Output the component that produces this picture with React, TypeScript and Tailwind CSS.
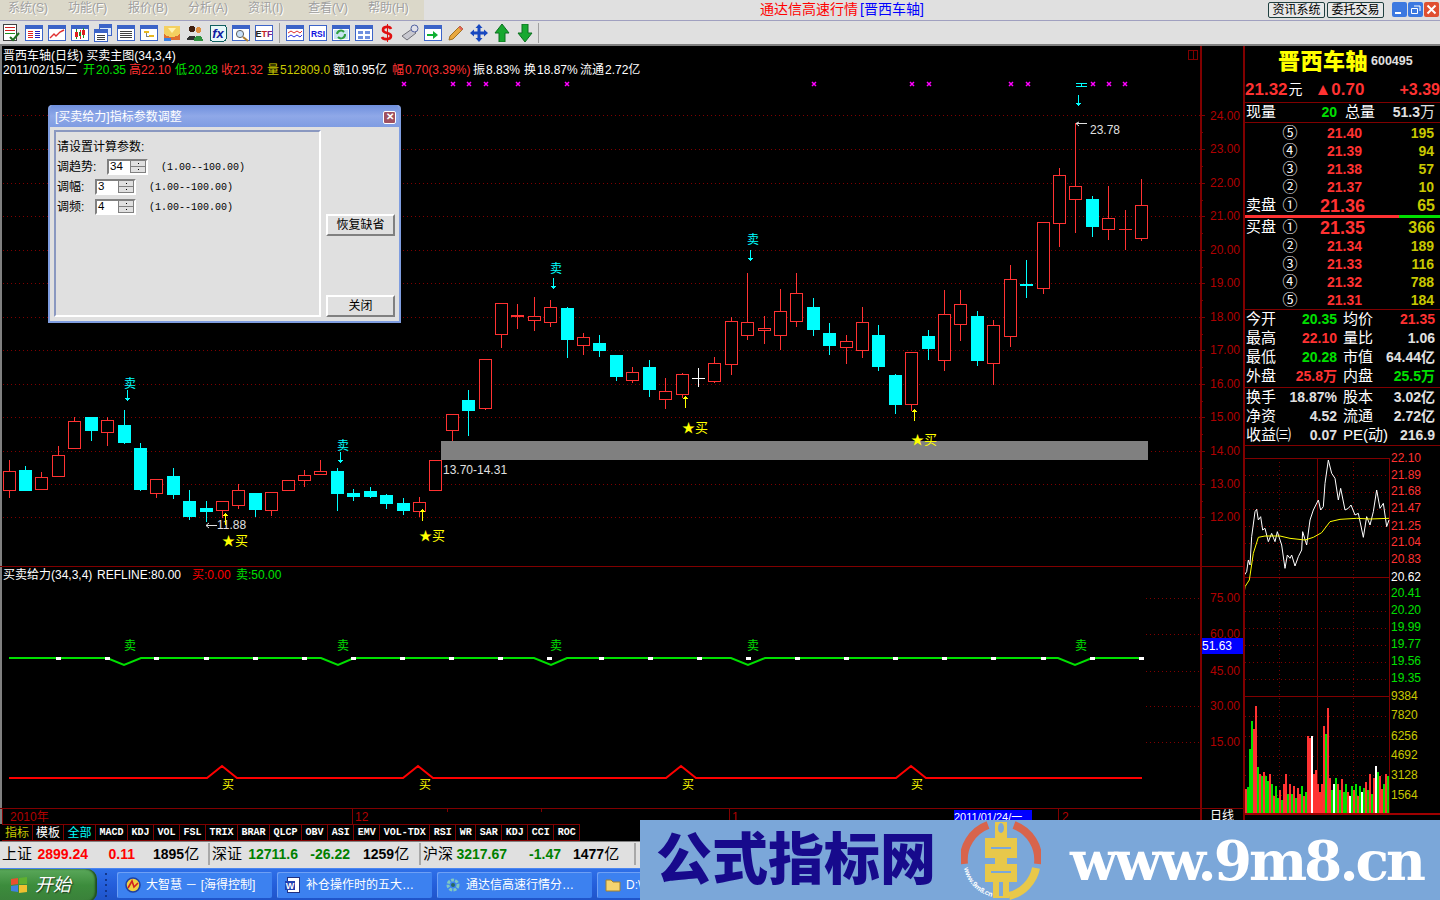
import React from 'react';

// [x, wickTop, wickBottom, bodyTop, bodyBottom, colour: r=hollow red, c=cyan, w=white]
const candles: [number, number, number, number, number, string][] = [
  [9, 460, 498, 471, 491, 'r'], [25, 466, 491, 470, 491, 'c'], [41, 472, 490, 477, 490, 'r'], [58, 446, 477, 455, 477, 'r'],
  [74, 417, 449, 421, 449, 'r'], [91, 417, 441, 417, 431, 'c'], [107, 417, 446, 420, 433, 'r'], [124, 410, 444, 425, 443, 'c'],
  [140, 443, 491, 448, 490, 'c'], [156, 479, 498, 479, 494, 'r'], [173, 468, 499, 476, 495, 'c'], [189, 490, 520, 501, 517, 'c'],
  [206, 501, 522, 508, 512, 'c'], [222, 501, 518, 501, 511, 'r'], [238, 484, 509, 490, 506, 'r'], [255, 493, 517, 493, 510, 'c'],
  [271, 492, 516, 492, 511, 'r'], [288, 480, 491, 480, 491, 'r'], [304, 470, 487, 475, 481, 'r'], [320, 460, 475, 471, 475, 'r'],
  [337, 468, 511, 471, 494, 'c'], [353, 489, 501, 493, 497, 'c'], [370, 487, 498, 491, 497, 'c'], [386, 494, 509, 495, 504, 'c'],
  [403, 498, 515, 503, 511, 'c'], [419, 497, 517, 502, 512, 'r'], [435, 460, 491, 460, 491, 'r'], [452, 414, 441, 414, 431, 'r'],
  [468, 390, 436, 400, 411, 'c'], [485, 359, 410, 359, 409, 'r'], [501, 303, 348, 303, 335, 'r'], [517, 304, 329, 315, 317, 'R'],
  [534, 297, 331, 316, 321, 'r'], [550, 300, 327, 307, 323, 'r'], [567, 307, 358, 308, 340, 'c'], [583, 333, 355, 337, 346, 'r'],
  [599, 335, 357, 343, 351, 'c'], [616, 355, 381, 355, 377, 'c'], [632, 367, 383, 372, 381, 'r'], [649, 360, 397, 367, 390, 'c'],
  [665, 378, 409, 391, 400, 'r'], [682, 373, 398, 374, 395, 'r'], [698, 368, 387, 378, 378, 'w'], [714, 357, 383, 363, 382, 'r'],
  [731, 317, 375, 321, 365, 'r'], [747, 273, 340, 322, 336, 'r'], [764, 316, 344, 328, 331, 'r'], [780, 289, 350, 311, 336, 'r'],
  [796, 273, 327, 293, 322, 'r'], [813, 298, 336, 307, 330, 'c'], [829, 323, 355, 333, 346, 'c'], [846, 335, 364, 341, 348, 'r'],
  [862, 307, 358, 322, 351, 'r'], [878, 325, 371, 335, 367, 'c'], [895, 374, 414, 375, 405, 'c'], [911, 352, 411, 352, 405, 'r'],
  [928, 330, 360, 336, 349, 'c'], [944, 290, 371, 314, 361, 'r'], [960, 290, 341, 304, 325, 'r'], [977, 311, 366, 316, 361, 'c'],
  [993, 320, 385, 325, 364, 'r'], [1010, 265, 347, 279, 337, 'r'], [1026, 260, 298, 284, 286, 'c'], [1043, 222, 294, 222, 289, 'r'],
  [1059, 168, 247, 175, 224, 'r'], [1075, 123, 233, 186, 200, 'r'], [1092, 196, 237, 199, 227, 'c'], [1108, 186, 240, 218, 230, 'r'],
  [1125, 210, 250, 229, 229, 'l'], [1141, 179, 241, 205, 239, 'r'],
];

const priceAxis = [
  ['24.00', 115.5], ['23.00', 149], ['22.00', 183], ['21.00', 216], ['20.00', 250], ['19.00', 283], ['18.00', 317],
  ['17.00', 350], ['16.00', 384], ['15.00', 417], ['14.00', 451], ['13.00', 484], ['12.00', 517],
] as [string, number][];
const indAxis = [['75.00', 598], ['60.00', 634], ['45.00', 671], ['30.00', 706], ['15.00', 742]] as [string, number][];

const quoteParts: [number, string, string][] = [
  [3, '2011/02/15/二', '#ffffff'], [83, '开', '#00e000'], [96, '20.35', '#00e000'], [129, '高', '#ff3232'], [141, '22.10', '#ff3232'],
  [175, '低', '#00e000'], [188, '20.28', '#00e000'], [221, '收', '#ff3232'], [233, '21.32', '#ff3232'], [267, '量', '#c8c800'],
  [280, '512809.0', '#c8c800'], [333, '额', '#ffffff'], [345, '10.95亿', '#ffffff'], [392, '幅', '#ff3232'], [405, '0.70(3.39%)', '#ff3232'],
  [473, '振', '#ffffff'], [486, '8.83%', '#ffffff'], [524, '换', '#ffffff'], [537, '18.87%', '#ffffff'], [580, '流通', '#ffffff'], [605, '2.72亿', '#ffffff'],
];

const marks = [404, 453, 469, 486, 518, 567, 814, 912, 929, 1011, 1028, 1093, 1109, 1125];
const greenTicks = [58, 107, 156, 206, 255, 304, 353, 402, 451, 500, 549, 601, 650, 699, 748, 797, 846, 895, 944, 993, 1043, 1092, 1141];

const T = ({ x, y, c = '#fff', s = 12, a, children }: { x: number; y: number; c?: string; s?: number; a?: 'end' | 'middle'; children: React.ReactNode }) => (
  <text x={x} y={y} fill={c} fontSize={s} textAnchor={a} dominantBaseline="central">{children}</text>
);

const Sell = ({ x, y, ax, ay, top }: { x: number; y: number; ax: number; ay: number; top?: boolean }) => (
  <g>
    {!top && <T x={x} y={y} c="#00ffff" a="middle">卖</T>}
    <path d={`M${ax + 0.5} ${ay - 5}V${ay + 5}M${ax - 1.5} ${ay + 3}L${ax + 0.5} ${ay + 5}L${ax + 2.5} ${ay + 3}`} stroke="#00ffff" fill="none" />
  </g>
);

const Buy = ({ x, y, ax, ay }: { x: number; y: number; ax: number; ay: number }) => (
  <g>
    <T x={x} y={y} c="#ffff00" s={13} a="middle">★买</T>
    <path d={`M${ax + 0.5} ${ay + 6}V${ay - 5}M${ax - 1.5} ${ay - 3}L${ax + 0.5} ${ay - 5}L${ax + 2.5} ${ay - 3}`} stroke="#ffff00" fill="none" />
  </g>
);

const ChartArea = () => (
  <svg width={1243} height={778} viewBox="0 46 1243 778" className="block shrink-0" shapeRendering="crispEdges">
    <rect x={0} y={46} width={2} height={778} fill="#808080" />
    {/* price grid */}
    {priceAxis.map(([label, y]) => (
      <g key={label}>
        <line x1={3} x2={1200} y1={Math.floor(y) + 0.5} y2={Math.floor(y) + 0.5} stroke="#800000" strokeDasharray="1 3" />
        <line x1={1201} x2={1205} y1={Math.floor(y) + 0.5} y2={Math.floor(y) + 0.5} stroke="#800000" />
        <line x1={1201} x2={1203} y1={Math.floor(y) + 17.5} y2={Math.floor(y) + 17.5} stroke="#800000" />
        <T x={1240} y={y} c="#b00000" a="end">{label}</T>
      </g>
    ))}
    <rect x={1200} y={46} width={2} height={778} fill="#800000" />
    <rect x={441} y={441} width={707} height={19} fill="#808080" />
    <rect x={1188.5} y={50.5} width={9} height={9} fill="none" stroke="#800000" />
    <line x1={1193} x2={1193} y1={50} y2={60} stroke="#800000" />

    <g>
      <text x={3} y={56} fill="#fff" fontSize={12} dominantBaseline="central">晋西车轴(日线) 买卖主图(34,3,4)</text>
      {quoteParts.map(([x, txt, c]) => <T key={x} x={x} y={70} c={c}>{txt}</T>)}
    </g>

    {marks.map((x) => (
      <path key={x} d={`M${x - 2} 82L${x + 2} 86M${x + 2} 82L${x - 2} 86`} stroke="#ff00ff" strokeWidth={1.5} shapeRendering="auto" />
    ))}

    {candles.map(([x, wt, wb, bt, bb, k], i) => {
      const col = k === 'c' ? '#00ffff' : k === 'w' ? '#ffffff' : '#ff3232';
      return (
        <g key={i}>
          <line x1={x + 0.5} x2={x + 0.5} y1={wt} y2={wb} stroke={col} />
          {k === 'c' || k === 'R' ? (
            <rect x={x - 6} y={bt} width={13} height={Math.max(bb - bt, 2)} fill={col} />
          ) : k === 'w' || k === 'l' ? (
            <line x1={x - 6} x2={x + 7} y1={bt + 0.5} y2={bt + 0.5} stroke={col} />
          ) : (
            <rect x={x - 5.5} y={bt + 0.5} width={12} height={bb - bt - 1} fill="#000" stroke={col} />
          )}
        </g>
      );
    })}

    <rect x={441} y={441} width={707} height={19} fill="#808080" />
    <T x={443} y={470} c="#e0e0e0">13.70-14.31</T>
    <path d="M206 525.5H217M206 525.5L209 523M206 525.5L209 528" stroke="#e0e0e0" fill="none" shapeRendering="auto" />
    <T x={217} y={525} c="#e0e0e0">11.88</T>
    <T x={1090} y={130} c="#e0e0e0">23.78</T>
    <path d="M1076 123.5L1079 122M1076 123.5L1079 126M1076 123.5H1087" stroke="#e0e0e0" fill="none" shapeRendering="auto" />

    <Sell x={130} y={384} ax={127} ay={395} />
    <Sell x={343} y={446} ax={340} ay={457} />
    <Sell x={556} y={269} ax={553} ay={283} />
    <Sell x={753} y={240} ax={750} ay={255} />
    <g>
      <path d="M1076 83.5H1087M1076 86.5H1087M1081.5 83V87" stroke="#00ffff" />
      <Sell x={1081} y={85} ax={1078} ay={100} top />
    </g>
    <Buy x={235} y={540} ax={225} ay={519} />
    <Buy x={432} y={535} ax={422} ay={515} />
    <Buy x={695} y={427} ax={685} ay={402} />
    <Buy x={924} y={439} ax={914} ay={415} />

    {/* indicator panel */}
    <line x1={0} x2={1243} y1={566.5} y2={566.5} stroke="#800000" />
    <T x={3} y={575}>买卖给力(34,3,4)</T>
    <T x={97} y={575}>REFLINE:80.00</T>
    <T x={192} y={575} c="#ff0000">买:0.00</T>
    <T x={236} y={575} c="#00e000">卖:50.00</T>

    {indAxis.map(([label, y]) => (
      <g key={label}>
        <line x1={1146} x2={1200} y1={y + 0.5} y2={y + 0.5} stroke="#800000" strokeDasharray="1 3" />
        <T x={1240} y={y} c="#b00000" a="end">{label}</T>
      </g>
    ))}
    <rect x={1202} y={638} width={41} height={16} fill="#0000ff" />
    <T x={1202} y={646}>51.63</T>

    <path
      d="M9 658H107L124 665L141 658H321L338 665L354 658H534L551 665L567 658H731L748 665L765 658H1058L1075 665L1092 658H1144"
      fill="none" stroke="#00e000" strokeWidth={2} shapeRendering="auto"
    />
    {greenTicks.map((x) => <rect key={x} x={x - 2} y={657} width={5} height={3} fill="#fff" />)}
    <path
      d="M9 778H207L222 766L237 778H403L418 766L433 778H666L681 766L696 778H896L911 766L926 778H1142"
      fill="none" stroke="#ff0000" strokeWidth={2} shapeRendering="auto"
    />
    {[130, 343, 556, 753, 1081].map((x) => <T key={x} x={x} y={646} c="#00e000" a="middle">卖</T>)}
    {[228, 425, 688, 917].map((x) => <T key={x} x={x} y={785} c="#ffff00" a="middle">买</T>)}

    {/* date axis */}
    <line x1={0} x2={1243} y1={808.5} y2={808.5} stroke="#800000" />
    <line x1={2} x2={2} y1={808} y2={824} stroke="#800000" />
    <T x={10} y={817} c="#b00000">2010年</T>
    <line x1={352.5} x2={352.5} y1={808} y2={824} stroke="#800000" />
    <T x={355} y={817} c="#b00000">12</T>
    <line x1={447.5} x2={447.5} y1={808} y2={812} stroke="#800000" />
    <line x1={541.5} x2={541.5} y1={808} y2={812} stroke="#800000" />
    <line x1={729.5} x2={729.5} y1={808} y2={824} stroke="#800000" />
    <T x={732} y={817} c="#b00000">1</T>
    <rect x={954} y={810} width={78} height={14} fill="#0000ff" />
    <T x={954} y={817} s={11}>2011/01/24/一</T>
    <line x1={1058.5} x2={1058.5} y1={808} y2={824} stroke="#800000" />
    <T x={1062} y={817} c="#b00000">2</T>
    <T x={1210} y={816}>日线</T>
  </svg>
);

const mini: [number, number][] = [
  [160, 380], [170, 365], [175, 330], [180, 345], [185, 260], [195, 185], [200, 178], [205, 210], [212, 200], [218, 240], [225, 235], [235, 275], [245, 250],
  [255, 275], [262, 245], [275, 285], [285, 355], [292, 315], [300, 325], [305, 315], [315, 348], [325, 320], [335, 300], [338, 245], [350, 285], [360, 210],
  [370, 180], [385, 150], [392, 180], [400, 170], [405, 100], [415, 30], [425, 70], [435, 85], [445, 150], [452, 115], [465, 180], [475, 175], [483, 165],
  [495, 195], [505, 190], [520, 262], [530, 200], [540, 225], [550, 185], [560, 120], [570, 175], [580, 160], [590, 230], [597, 210],
];
const miniAvg: [number, number][] = [
  [160, 448], [165, 410], [178, 390], [190, 310], [205, 262], [225, 258], [270, 258], [300, 265], [345, 270], [370, 262], [395, 248], [420, 215], [450, 208], [500, 205], [540, 207], [597, 205],
];
const toPts = (a: [number, number][]) => a.map(([x, y]) => `${1190 + x / 3},${450 + y / 3}`).join(' ');

const volH = [63, 25, 27, 65, 93, 85, 108, 47, 40, 38, 42, 38, 33, 40, 30, 18, 28, 16, 24, 14, 30, 40, 20, 30, 20, 28, 16, 26, 20, 28, 18, 22, 78, 76, 78, 40, 44, 30, 22, 30, 88, 80, 106, 36, 24, 30, 36, 30, 24, 35, 22, 30, 22, 18, 28, 24, 30, 18, 28, 22, 26, 32, 24, 40, 20, 36, 48, 42, 38, 25, 30, 40, 38];
const volC = 'grgggrrgrgrggrgrggrgrrgrgrgrrgrgrrwrrrrrrgrrgwgrgrggrwgrgrgwgrgrgrwgrrgrgrggrgr';

const miniLabels: [string, number, string][] = [
  ['22.10', 458, '#ff3232'], ['21.89', 475, '#ff3232'], ['21.68', 491, '#ff3232'], ['21.47', 508, '#ff3232'], ['21.25', 526, '#ff3232'], ['21.04', 542, '#ff3232'], ['20.83', 559, '#ff3232'],
  ['20.62', 577, '#ffffff'], ['20.41', 593, '#00e000'], ['20.20', 610, '#00e000'], ['19.99', 627, '#00e000'], ['19.77', 644, '#00e000'], ['19.56', 661, '#00e000'], ['19.35', 678, '#00e000'],
  ['9384', 696, '#c8c800'], ['7820', 715, '#c8c800'], ['6256', 736, '#c8c800'], ['4692', 755, '#c8c800'], ['3128', 775, '#c8c800'], ['1564', 795, '#c8c800'],
];

const MiniChart = () => (
  <svg width={195} height={378} viewBox="1245 446 195 378" className="block" shapeRendering="crispEdges">
    {[475, 492, 509, 526, 543, 560, 594, 611, 628, 645, 662, 679, 716, 736, 756, 775, 795].map((y) => (
      <line key={y} x1={1245} x2={1389} y1={y + 0.5} y2={y + 0.5} stroke="#800000" strokeDasharray="1 3" />
    ))}
    {[1279, 1353].map((x) => <line key={x} x1={x + 0.5} x2={x + 0.5} y1={458} y2={813} stroke="#800000" strokeDasharray="1 3" />)}
    <line x1={1317} x2={1317} y1={458} y2={813} stroke="#800000" />
    {[458, 577, 696].map((y) => <line key={y} x1={1245} x2={1389} y1={y + 0.5} y2={y + 0.5} stroke="#800000" />)}
    <line x1={1389.5} x2={1389.5} y1={458} y2={814} stroke="#800000" />
    {volH.map((h, i) => {
      const c = volC[i] === 'g' ? '#00e000' : volC[i] === 'w' ? '#ffffff' : '#ff3232';
      return <rect key={i} x={1243 + i * 2} y={814 - h} width={2} height={h} fill={c} />;
    })}
    <rect x={1245} y={813} width={195} height={2} fill="#a00000" />
    <polyline points={toPts(mini)} fill="none" stroke="#fff" shapeRendering="auto" />
    <polyline points={toPts(miniAvg)} fill="none" stroke="#ffff00" shapeRendering="auto" />
    {miniLabels.map(([l, y, c]) => <T key={l} x={1391} y={y} c={c} s={12}>{l}</T>)}
  </svg>
);

const asks = [['⑤', '21.40', '195'], ['④', '21.39', '94'], ['③', '21.38', '57'], ['②', '21.37', '10']];
const bids = [['②', '21.34', '189'], ['③', '21.33', '116'], ['④', '21.32', '788'], ['⑤', '21.31', '184']];

const BookRow = ({ n, price, vol }: { n: string; price: string; vol: string }) => (
  <div className="flex h-[18px] items-center">
    <span className="ml-[37px] w-[16px] shrink-0 text-center text-[15px] text-white">{n}</span>
    <span className="w-[64px] shrink-0 text-right text-[14px] font-bold text-[#ff3232]">{price}</span>
    <span className="w-[72px] shrink-0 text-right text-[14px] font-bold text-[#c8c800]">{vol}</span>
  </div>
);

const BestRow = ({ label, price, vol }: { label: string; price: string; vol: string }) => (
  <div className="flex h-[19px] items-center">
    <span className="w-[37px] shrink-0 pl-[1px] text-[15px] text-white">{label}</span>
    <span className="w-[16px] shrink-0 text-center text-[15px] text-white">①</span>
    <span className="w-[67px] shrink-0 pt-[2px] text-right text-[18px] font-bold text-[#ff3232]">{price}</span>
    <span className="w-[70px] shrink-0 pt-[1px] text-right text-[16px] font-bold text-[#c8c800]">{vol}</span>
  </div>
);

const Info = ({ a, b, ac = 'text-[#e0e0e0]', c, d, dc = 'text-[#e0e0e0]' }: { a: string; b: string; ac?: string; c: string; d: string; dc?: string }) => (
  <div className="flex h-[19px] items-center text-[15px] text-white">
    <span className="w-[34px] shrink-0 whitespace-nowrap pl-[1px]">{a}</span>
    <span className={`w-[58px] shrink-0 whitespace-nowrap text-right text-[14px] font-bold ${ac}`}>{b}</span>
    <span className="ml-[6px] w-[32px] shrink-0 whitespace-nowrap">{c}</span>
    <span className={`w-[60px] shrink-0 whitespace-nowrap text-right text-[14px] font-bold ${dc}`}>{d}</span>
  </div>
);

const QuotePanel = () => (
  <div className="flex w-[197px] shrink-0 flex-col overflow-hidden border-l-2 border-[#800000] *:shrink-0">
    <div className="flex h-[30px] items-center pl-[33px] pt-[1px]">
      <span className="text-[22px] leading-none font-black tracking-[0.5px] text-[#ffff00] whitespace-nowrap">晋西车轴</span>
      <span className="ml-[3px] text-[12.5px] font-bold text-[#e0e0e0]">600495</span>
    </div>
    <div className="flex h-[26px] items-center whitespace-nowrap pt-[1px] text-[#ff3232]">
      <span className="text-[17px] font-bold">21.32</span>
      <span className="ml-[1px] text-[14px] text-white">元</span>
      <span className="ml-[12px] text-[17px] font-bold">▲0.70</span>
      <span className="ml-auto text-[16px] font-bold">+3.39</span>
    </div>
    <div className="flex h-[21px] items-center border-y border-[#800000] text-[15px] text-white">
      <span className="w-[34px] pl-[1px]">现量</span>
      <span className="w-[58px] text-right text-[14px] font-bold text-[#00e000]">20</span>
      <span className="ml-[8px] w-[36px]">总量</span>
      <span className="w-[54px] whitespace-nowrap text-right text-[14px] font-bold text-[#e0e0e0]">51.3<span className="text-[15px] font-normal">万</span></span>
    </div>
    <div className="h-[1px]" />
    {asks.map(([n, p, v]) => <BookRow key={n} n={n} price={p} vol={v} />)}
    <BestRow label="卖盘" price="21.36" vol="65" />
    <div className="flex h-[3px]">
      <div className="w-[154px] bg-[#ff3232]" />
      <div className="flex-1 bg-[#00e000]" />
    </div>
    <BestRow label="买盘" price="21.35" vol="366" />
    {bids.map(([n, p, v]) => <BookRow key={n} n={n} price={p} vol={v} />)}
    <div className="border-t border-[#800000] pb-[1px]">
      <Info a="今开" b="20.35" ac="text-[#00e000]" c="均价" d="21.35" dc="text-[#ff3232]" />
      <Info a="最高" b="22.10" ac="text-[#ff3232]" c="量比" d="1.06" />
      <Info a="最低" b="20.28" ac="text-[#00e000]" c="市值" d="64.44亿" />
      <Info a="外盘" b="25.8万" ac="text-[#ff3232]" c="内盘" d="25.5万" dc="text-[#00e000]" />
    </div>
    <div className="border-t border-[#800000]">
      <Info a="换手" b="18.87%" c="股本" d="3.02亿" />
      <Info a="净资" b="4.52" c="流通" d="2.72亿" />
      <Info a="收益㈢" b="0.07" c="PE(动)" d="216.9" />
    </div>
    <div className="border-t border-[#800000]">
      <MiniChart />
    </div>
  </div>
);

/* toolbar icons, all on an 18 box */
const Svg = ({ children }: { children: React.ReactNode }) => (
  <svg width={18} height={18} viewBox="0 0 18 18" className="shrink-0" shapeRendering="crispEdges">{children}</svg>
);
const Win = ({ children }: { children?: React.ReactNode }) => (
  <Svg>
    <rect x={0.5} y={1.5} width={17} height={15} fill="#fff" stroke="#3c64c8" />
    <rect x={1} y={2} width={16} height={3} fill="#3c64c8" />
    {children}
  </Svg>
);
const listLines = (
  <path d="M3 7.5H15M3 9.5H15M3 11.5H15M3 13.5H15" stroke="#404040" />
);

const toolIcons = [
  <Svg key="1">
    <rect x={1.5} y={0.5} width={13} height={16} fill="#fff" stroke="#404040" />
    <path d="M3 3.5H13M3 6.5H13" stroke="#d02020" /><path d="M3 9.5H13" stroke="#209020" />
    <path d="M8 13L11 16L17 9" fill="none" stroke="#207020" strokeWidth={2} shapeRendering="auto" />
  </Svg>,
  <Win key="2">
    <path d="M3 7.5H8M3 9.5H8M3 11.5H8M3 13.5H8" stroke="#e02020" />
    <path d="M10 7.5H15M10 9.5H15M10 11.5H15M10 13.5H15" stroke="#2020c0" />
  </Win>,
  <Win key="3"><path d="M2 14L6 10L8 12L12 8L16 6" fill="none" stroke="#e03030" strokeWidth={1.4} shapeRendering="auto" /></Win>,
  <Win key="4">
    <path d="M5.5 5V15M12.5 4V14" stroke="#209020" /><rect x={4} y={8} width={3} height={5} fill="#e02020" />
    <path d="M9 6V15" stroke="#e02020" /><rect x={8} y={8} width={2} height={4} fill="#209020" /><rect x={11} y={6} width={3} height={5} fill="#e02020" />
  </Win>,
  <Svg key="5">
    <rect x={5.5} y={0.5} width={12} height={11} fill="#dce8fa" stroke="#3c64c8" /><rect x={6} y={1} width={11} height={3} fill="#3c64c8" />
    <rect x={0.5} y={5.5} width={13} height={12} fill="#fff" stroke="#3c64c8" /><rect x={1} y={6} width={12} height={3} fill="#3c64c8" />
    <path d="M3 11.5H11M3 13.5H11M3 15.5H11" stroke="#404040" />
  </Svg>,
  <Win key="6">{listLines}</Win>,
  <Win key="7"><path d="M4 7H9V9H4ZM9 11H14V13H9Z" fill="#e8b820" /><path d="M6 9V12H9" fill="none" stroke="#808080" /></Win>,
  <Svg key="8">
    <rect x={1} y={2} width={16} height={14} fill="#f4d060" />
    <path d="M1 10C5 14 13 14 17 10V16H1Z" fill="#e07030" /><path d="M5 4L9 9L13 4Z" fill="#fff4b0" shapeRendering="auto" />
    <path d="M1 14H8V17H1Z" fill="#3c80e0" />
  </Svg>,
  <Svg key="9">
    <circle cx={6} cy={5} r={3.2} fill="#402010" /><path d="M1 16C1 10 11 10 11 16Z" fill="#303030" />
    <circle cx={12.5} cy={6} r={3} fill="#e09040" /><path d="M8 17C8 10 17 10 17 17Z" fill="#309040" />
  </Svg>,
  <Svg key="10">
    <rect x={1} y={1} width={16} height={16} rx={2} fill="#e8f8f8" stroke="#106060" />
    <text x={9} y={14} fontSize={13} fontStyle="italic" fontWeight={700} textAnchor="middle" fill="#1020a0">fx</text>
  </Svg>,
  <Win key="11">
    <circle cx={8} cy={10} r={3.6} fill="#c8e0f8" stroke="#606060" shapeRendering="auto" />
    <path d="M11 13L16 17" stroke="#b08030" strokeWidth={2} shapeRendering="auto" />
  </Win>,
  <Svg key="12">
    <rect x={0.5} y={1.5} width={17} height={15} fill="#fff" stroke="#3c64c8" />
    <text x={9} y={13} fontSize={9} fontWeight={700} textAnchor="middle" fill="#202020">E<tspan fill="#c02020">T</tspan><tspan fill="#802080">F</tspan></text>
  </Svg>,
  <Win key="13"><path d="M2 9L5 7L8 9L11 7L14 9L16 7" fill="none" stroke="#e03030" shapeRendering="auto" /><path d="M2 13L5 11L8 13L11 11L14 13L16 11" fill="none" stroke="#3030e0" shapeRendering="auto" /></Win>,
  <Svg key="14">
    <rect x={0.5} y={1.5} width={17} height={15} fill="#fff" stroke="#3c64c8" />
    <text x={9} y={13} fontSize={8.5} fontWeight={700} textAnchor="middle" fill="#1010e0">RSI</text>
  </Svg>,
  <Win key="15">
    <rect x={2} y={6} width={14} height={9} fill="#c8e4f0" />
    <path d="M5 10A4 4 0 0 1 12 8M13 10A4 4 0 0 1 6 13" fill="none" stroke="#30a040" strokeWidth={2} shapeRendering="auto" />
  </Win>,
  <Win key="16"><path d="M3 7H8V10H3ZM10 7H15V10H10ZM3 12H8V15H3ZM10 12H15V15H10Z" fill="#7090e0" /></Win>,
  <Svg key="17">
    <path d="M13 5C12 2 5 2 5 6C5 10 13 8 13 12C13 16 5 16 4 13" fill="none" stroke="#e01010" strokeWidth={2.6} shapeRendering="auto" />
    <path d="M9 0V18" stroke="#e01010" />
  </Svg>,
  <Svg key="18">
    <path d="M1 12L11 5L15 9L6 16Z" fill="#c8c8d0" stroke="#707078" shapeRendering="auto" />
    <circle cx={13.5} cy={4.5} r={3.5} fill="#e0e0e8" stroke="#5060a0" shapeRendering="auto" />
  </Svg>,
  <Win key="19"><path d="M3 10H9V7L14 11L9 15V12H3Z" fill="#10b030" shapeRendering="auto" /></Win>,
  <Svg key="20">
    <path d="M13 2L16 5L6 15L2 16L3 12Z" fill="#e8a840" stroke="#a07020" shapeRendering="auto" />
    <path d="M13 2L16 5L14.5 6.5L11.5 3.5Z" fill="#e06060" shapeRendering="auto" />
  </Svg>,
  <Svg key="21">
    <path d="M9 0L12.5 4H10.5V7.5H14V5.5L18 9L14 12.5V10.5H10.5V14H12.5L9 18L5.5 14H7.5V10.5H4V12.5L0 9L4 5.5V7.5H7.5V4H5.5Z" fill="#1848c0" shapeRendering="auto" />
  </Svg>,
  <Svg key="22"><path d="M9 0L16 9H12V18H6V9H2Z" fill="#18a830" stroke="#0c7020" shapeRendering="auto" /></Svg>,
  <Svg key="23"><path d="M9 18L16 9H12V0H6V9H2Z" fill="#18a830" stroke="#0c7020" shapeRendering="auto" /></Svg>,
];

const menus = ['系统(S)', '功能(F)', '报价(B)', '分析(A)', '资讯(I)', '查看(V)', '帮助(H)'];

const TopBar = () => (
  <div className="flex h-[21px] shrink-0 items-stretch border-b border-[#a0a0c0] bg-[#e0e0e0] text-[12px]">
    <div className="flex w-[424px] shrink-0 items-center bg-[#dbd8c9] pl-[8px] pb-[4px]">
      {menus.map((m) => (
        <span key={m} className="w-[60px] shrink-0 whitespace-nowrap text-[#a0a0a0] [text-shadow:1px_1px_0_#ffffff]">{m}</span>
      ))}
    </div>
    <div className="flex w-[844px] shrink-0 items-center pl-[336px] pb-[1px] text-[14px] whitespace-nowrap">
      <span className="text-[#ff0000]">通达信高速行情</span>
      <span className="ml-[2px] text-[#0000ff]">[晋西车轴]</span>
    </div>
    <div className="flex flex-1 items-center gap-[2px] pb-[1px]">
      {['资讯系统', '委托交易'].map((b) => (
        <span key={b} className="flex h-[16px] w-[57px] items-center justify-center rounded-[2px] border border-[#204040] bg-[#e8e8e8] text-[12px] text-black">{b}</span>
      ))}
      <div className="ml-[6px] flex gap-[1px]">
        {['bg-[#3c78e0]', 'bg-[#3c78e0]', 'bg-[#e05030]'].map((c, i) => (
          <svg key={i} width={15} height={15} viewBox="0 0 15 15" className={`rounded-[2px] ${c}`}>
            {i === 0 && <rect x={3} y={10} width={6} height={2} fill="#fff" />}
            {i === 1 && <path d="M3.5 6.5H9.5V11.5H3.5ZM6 4H12V9" fill="none" stroke="#fff" />}
            {i === 2 && <path d="M3.5 3.5L11.5 11.5M11.5 3.5L3.5 11.5" stroke="#fff" strokeWidth={2} />}
          </svg>
        ))}
      </div>
    </div>
  </div>
);

const Toolbar = () => (
  <div className="flex h-[25px] shrink-0 items-center border-b-2 border-[#808080] bg-[#e0e0e0] pl-[2px]">
    <div className="flex gap-[5px]">{toolIcons.slice(0, 12)}</div>
    <div className="mx-[6px] h-[20px] w-[1px] shrink-0 border-r border-[#a0a0a0] bg-[#ffffff]" />
    <div className="flex gap-[5px]">{toolIcons.slice(12)}</div>
    <div className="ml-[4px] h-[20px] w-[1px] shrink-0 bg-[#a0a0a0]" />
  </div>
);

const tabs = ['MACD', 'KDJ', 'VOL', 'FSL', 'TRIX', 'BRAR', 'QLCP', 'OBV', 'ASI', 'EMV', 'VOL-TDX', 'RSI', 'WR', 'SAR', 'KDJ', 'CCI', 'ROC'];

const TabRow = () => (
  <div className="flex h-[18px] shrink-0 items-stretch border-b border-[#808080] bg-black pl-[2px] text-white">
    <span className="flex w-[31px] items-center justify-center border-y border-r border-[#800000] text-[12px] text-[#c8c800]">指标</span>
    <span className="flex w-[31px] items-center justify-center border-y border-r border-[#800000] text-[12px]">模板</span>
    <span className="flex w-[32px] items-center justify-center border-y border-r border-[#800000] text-[12px] text-[#00ffff]">全部</span>
    {tabs.map((t, i) => (
      <span key={i} className="flex items-center border-y border-r border-[#800000] px-[3.5px] font-['Liberation_Mono',monospace] text-[10px] font-bold">{t}</span>
    ))}
  </div>
);

const Idx = ({ name, w, val, valW, chg, chgW, amt, amtGap, color }: { name: string; w: string; val: string; valW: string; chg: string; chgW: string; amt: string; amtGap: string; color: string }) => (
  <div className={`flex shrink-0 items-center border-r-2 border-[#a8a8a8] ${w}`}>
    <span className="w-[34px] shrink-0 pl-[2px] text-[15px] text-black">{name}</span>
    <span className={`shrink-0 text-right text-[14px] font-bold ${color} ${valW}`}>{val}</span>
    <span className={`shrink-0 text-right text-[14px] font-bold ${color} ${chgW}`}>{chg}</span>
    <span className={`whitespace-nowrap text-[14px] font-bold text-black ${amtGap}`}>{amt}<span className="text-[15px] font-normal">亿</span></span>
  </div>
);

const StatusRow = () => (
  <div className="flex h-[26px] shrink-0 items-center bg-[#e0e0e0] pb-[3px] pt-[1px]">
    <Idx name="上证" w="w-[210px]" val="2899.24" valW="w-[54px]" chg="0.11" chgW="w-[47px]" amt="1895" amtGap="ml-[18px]" color="text-[#ff0000]" />
    <Idx name="深证" w="w-[211px]" val="12711.6" valW="w-[54px]" chg="-26.22" chgW="w-[52px]" amt="1259" amtGap="ml-[13px]" color="text-[#008000]" />
    <Idx name="沪深" w="w-[215px]" val="3217.67" valW="w-[52px]" chg="-1.47" chgW="w-[54px]" amt="1477" amtGap="ml-[12px]" color="text-[#008000]" />
  </div>
);

const TaskBtn = ({ icon, label }: { icon: React.ReactNode; label: string }) => (
  <div className="flex h-[26px] w-[155px] shrink-0 items-center gap-[5px] overflow-hidden rounded-[2px] bg-[#3c81f0] pl-[8px] text-[12px] whitespace-nowrap text-white shadow-[inset_1px_1px_0_#6ea0f5]">
    {icon}
    <span>{label}</span>
  </div>
);

const Taskbar = () => (
  <div className="flex h-[33px] shrink-0 items-center gap-[2px] border-t border-[#4a86f0] bg-gradient-to-b from-[#2f70e8] via-[#245edb] to-[#1f54c8]">
    <div className="flex h-[33px] w-[97px] shrink-0 items-center gap-[6px] rounded-r-[10px] bg-gradient-to-b from-[#5aa85a] via-[#3c8c3c] to-[#3a803a] pl-[9px] shadow-[inset_-2px_0_2px_#204c20]">
      <svg width={20} height={20} viewBox="0 0 20 20" className="shrink-0">
        <path d="M2 4L9 3V9L2 10Z" fill="#e85030" /><path d="M10 3L18 2V9L10 9Z" fill="#60b030" />
        <path d="M2 11L9 10V17L2 16Z" fill="#4080e0" /><path d="M10 10H18V17L10 18Z" fill="#f0c030" />
      </svg>
      <span className="text-[18px] italic text-white [text-shadow:1px_1px_1px_#204020]">开始</span>
    </div>
    <div className="ml-[6px] flex h-[24px] w-[10px] shrink-0 flex-col justify-between">
      {[0, 1, 2, 3, 4].map((i) => <span key={i} className="h-[2px] w-[2px] bg-[#12368c]" />)}
    </div>
    <div className="flex gap-[5px]">
      <TaskBtn
        label="大智慧 － [海得控制]"
        icon={(
          <svg width={16} height={16} viewBox="0 0 16 16" className="shrink-0">
            <circle cx={8} cy={8} r={7} fill="#f0d040" stroke="#2040a0" strokeWidth={1.6} />
            <path d="M3 11L7 4L9 10L13 6" fill="none" stroke="#d02020" strokeWidth={1.6} />
          </svg>
        )}
      />
      <TaskBtn
        label="补仓操作时的五大…"
        icon={(
          <svg width={16} height={16} viewBox="0 0 16 16" className="shrink-0">
            <rect x={2.5} y={0.5} width={12} height={15} fill="#fff" stroke="#203080" />
            <rect x={0} y={4} width={10} height={9} fill="#2040b0" />
            <text x={5} y={12} fontSize={9} fontWeight={700} textAnchor="middle" fill="#fff">W</text>
          </svg>
        )}
      />
      <TaskBtn
        label="通达信高速行情分…"
        icon={(
          <svg width={16} height={16} viewBox="0 0 16 16" className="shrink-0">
            <circle cx={8} cy={8} r={5} fill="none" stroke="#80c8c0" strokeWidth={3} strokeDasharray="3 1.2" />
            <circle cx={8} cy={8} r={2} fill="#2a6a60" />
          </svg>
        )}
      />
      <TaskBtn
        label="D:\"
        icon={(
          <svg width={16} height={16} viewBox="0 0 16 16" className="shrink-0">
            <path d="M1 3H6L8 5H15V14H1Z" fill="#f4d470" stroke="#a08030" />
          </svg>
        )}
      />
    </div>
  </div>
);

const Spin = ({ v, w }: { v: string; w: string }) => (
  <div className={`flex h-[16px] shrink-0 items-center border-2 border-t-[#808080] border-l-[#808080] border-r-white border-b-white bg-white ${w}`}>
    <span className="flex-1 pl-[1px] text-[11.5px] leading-none text-black">{v}</span>
    <div className="flex h-[12px] w-[16px] flex-col gap-[1px] bg-[#808080] px-[1px]">
      <span className="flex h-[5px] items-center justify-center bg-[#e0e0e0]"><span className="h-[1px] w-[1px] bg-black" /></span>
      <span className="flex h-[5px] items-center justify-center bg-[#e0e0e0]"><span className="h-[1px] w-[1px] bg-black" /></span>
    </div>
  </div>
);

const Param = ({ label, labelW, v, w, gap }: { label: string; labelW: string; v: string; w: string; gap: string }) => (
  <div className="flex h-[20px] items-center whitespace-nowrap">
    <span className={`shrink-0 ${labelW}`}>{label}</span>
    <Spin v={v} w={w} />
    <span className={`font-['Liberation_Mono',monospace] text-[10px] ${gap}`}>(1.00--100.00)</span>
  </div>
);

const DlgBtn = ({ label }: { label: string }) => (
  <div className="flex h-[22px] w-[69px] items-center justify-center border-2 border-t-white border-l-white border-r-[#808080] border-b-[#808080] bg-[#e0e0e0] text-[12px] text-black">{label}</div>
);

const ParamDialog = () => (
  <div className="absolute left-[48px] top-[105px] flex h-[218px] w-[353px] flex-col overflow-hidden rounded-t-[4px] border-2 border-t-0 border-[#7f9de0] bg-[#e0e0e0] text-[12px] text-black">
    <div className="flex h-[22px] shrink-0 items-center justify-between bg-gradient-to-b from-[#6f8fdd] via-[#8fa8e8] to-[#7f9ce2] pl-[5px] pr-[3px] pt-[2px]">
      <span className="text-[12px] text-white">[买卖给力]指标参数调整</span>
      <span className="flex h-[13px] w-[13px] items-center justify-center rounded-[2px] border border-white bg-[#a05060] text-[10px] leading-none font-bold text-white">✕</span>
    </div>
    <div className="flex flex-1 pl-[4px]">
      <div className="mt-[3px] mb-[4px] w-[267px] shrink-0 border-2 border-t-[#8a98c0] border-l-[#8a98c0] border-r-white border-b-white pl-[1px] pt-[5px]">
        <div className="flex h-[20px] items-center">请设置计算参数:</div>
        <Param label="调趋势:" labelW="w-[50px]" v="34" w="w-[41px]" gap="ml-[13px]" />
        <Param label="调幅:" labelW="w-[38px]" v="3" w="w-[41px]" gap="ml-[13px]" />
        <Param label="调频:" labelW="w-[38px]" v="4" w="w-[41px]" gap="ml-[13px]" />
      </div>
      <div className="ml-[5px] flex flex-1 flex-col pb-[4px]">
        <div className="mt-[87px]"><DlgBtn label="恢复缺省" /></div>
        <div className="mt-auto"><DlgBtn label="关闭" /></div>
      </div>
    </div>
  </div>
);

const Banner = () => (
  <div className="absolute left-[640px] top-[820px] flex h-[80px] w-[800px] items-center bg-[#7ba7d9]">
    <span className="ml-[16px] w-[286px] shrink-0 text-[56px] leading-none font-black whitespace-nowrap text-[#170a8c]">公式指标网</span>
    <svg width={80} height={80} viewBox="0 0 80 80" className="ml-[19px] shrink-0">
      <path d="M3 44A37 37 0 0 1 27 5" fill="none" stroke="#d8644c" strokeWidth={8} />
      <path d="M53 5A37 37 0 0 1 77 44" fill="none" stroke="#d8644c" strokeWidth={8} />
      <path d="M75 48A36 36 0 0 1 48 76" fill="none" stroke="#e8c84a" strokeWidth={8} />
      <path d="M34 2H46V18H56V38H46V44H56V62H48V78H32V62H24V44H34V38H24V18H34Z" fill="#e8c84a" />
      <ellipse cx={40} cy={8} rx={3} ry={5} fill="#7ba7d9" />
      <path d="M30 28H50M30 52H50" stroke="#7ba7d9" strokeWidth={2} />
      <path d="M38 62H42V76H38Z" fill="#7ba7d9" />
      <path id="logoArc" d="M3 48A37 37 0 0 0 32 77" fill="none" />
      <text fontSize={7} fontWeight={700} fill="#fff"><textPath href="#logoArc">www.9m8.cn</textPath></text>
    </svg>
    <span className="ml-[29px] font-['DejaVu_Serif',serif] text-[55px] leading-none font-black tracking-[-3px] whitespace-nowrap text-white">www.9m8.cn</span>
  </div>
);

export default function App() {
  return (
    <div className="relative flex h-[900px] w-[1440px] flex-col overflow-hidden bg-black font-['Liberation_Sans','Noto_Sans_CJK_SC',sans-serif]">
      <TopBar />
      <Toolbar />
      <div className="flex h-[778px] shrink-0">
        <ChartArea />
        <QuotePanel />
      </div>
      <TabRow />
      <StatusRow />
      <Taskbar />
      <ParamDialog />
      <Banner />
    </div>
  );
}
